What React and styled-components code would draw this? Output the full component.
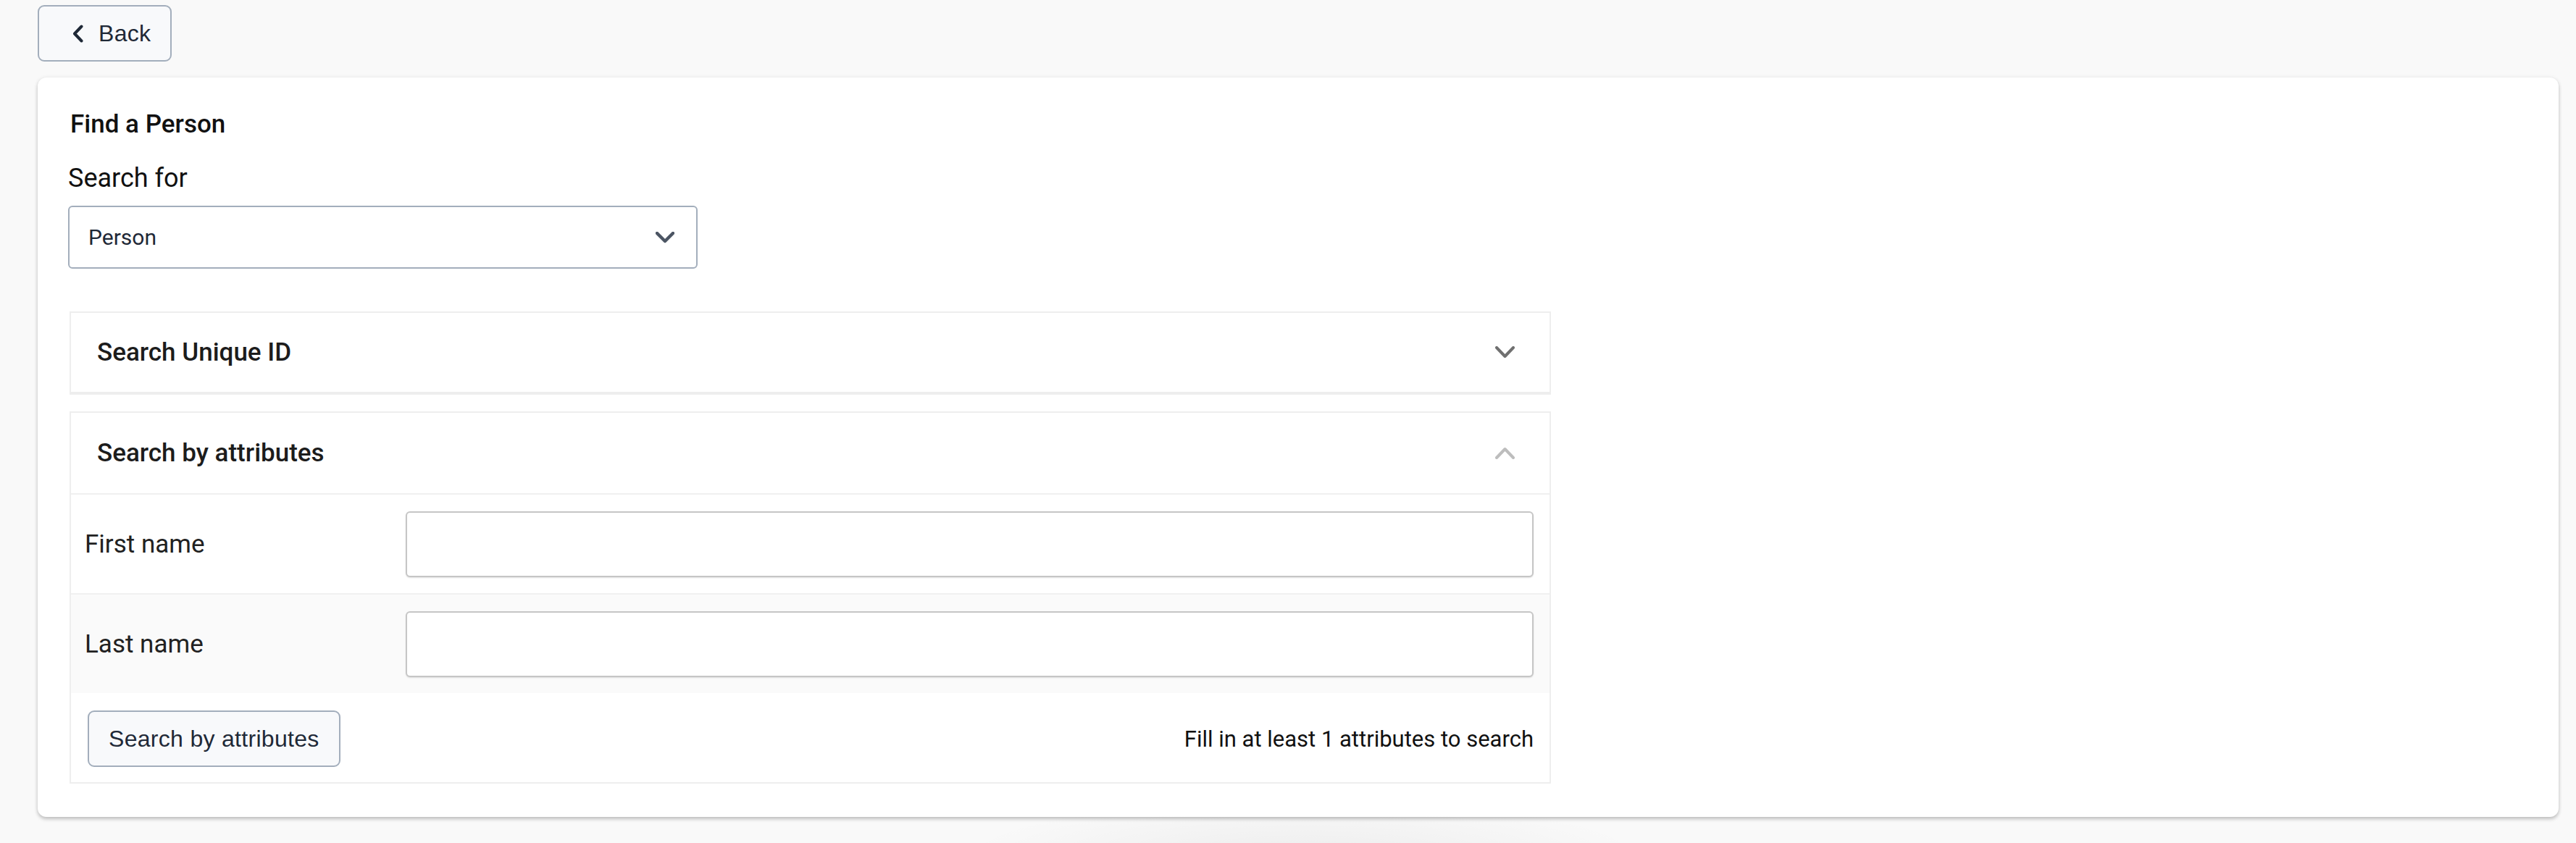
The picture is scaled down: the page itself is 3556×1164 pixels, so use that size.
import React from 'react'
import styled, { createGlobalStyle } from 'styled-components'

const GlobalStyle = createGlobalStyle`
  * { box-sizing: border-box; }
  body {
    margin: 0;
    background: #f9f9f9;
    font-family: Roboto, "Liberation Sans", Arial, sans-serif;
    color: #212121;
  }
`

const Page = styled.div`
  min-height: 1164px;
  padding: 7px 24px 0 52px;
  display: flex;
  flex-direction: column;
  align-items: flex-start;
  background: radial-gradient(ellipse 480px 90px at 1800px 1190px, rgba(0, 0, 0, 0.05), transparent);
`

const OutlineButton = styled.button`
  display: inline-flex;
  align-items: center;
  gap: 21px;
  height: 78px;
  padding: 0 ${p => p.$padRight || 28}px 0 ${p => p.$padLeft || 28}px;
  background: #f8f9fb;
  border: 2px solid #a3aebc;
  border-radius: 9px;
  font-family: "Liberation Sans", Arial, sans-serif;
  font-size: 32px;
  letter-spacing: 0.3px;
  color: #1f2937;
  cursor: pointer;
`

const Card = styled.div`
  align-self: stretch;
  margin-top: 22px;
  padding: 44px 0 46px 42px;
  background: #fff;
  border-radius: 12px;
  box-shadow: 0 3px 5px rgba(0, 0, 0, 0.22), 0 0 6px rgba(0, 0, 0, 0.06);
  display: flex;
  flex-direction: column;
  align-items: flex-start;
`

const Title = styled.h2`
  margin: 0 0 33px 3px;
  font-size: 35px;
  font-weight: 500;
  line-height: 41px;
  color: #111;
`

const FieldLabel = styled.label`
  font-size: 36px;
  line-height: 42px;
  margin-bottom: 17px;
  color: #111;
`

const Select = styled.div`
  width: 869px;
  height: 87px;
  display: flex;
  align-items: center;
  justify-content: space-between;
  padding: 0 30px 0 26px;
  border: 2px solid #a3aebc;
  border-radius: 6px;
  font-size: 30px;
  color: #1f2937;
  margin-bottom: 59px;
`

const Accordion = styled.section`
  width: 2045px;
  margin-left: 2px;
  margin-bottom: ${p => p.$gap || 0}px;
  border: 2px solid #eeeeee;
  border-bottom-width: ${p => (p.$open ? 2 : 4)}px;
  background: #fff;
`

const AccordionHeader = styled.div`
  height: ${p => p.$h}px;
  display: flex;
  align-items: center;
  justify-content: space-between;
  padding: 0 48px 0 36px;
  font-size: 35px;
  font-weight: 500;
  color: #1c1c1c;
`

const Row = styled.div`
  height: 138px;
  display: grid;
  grid-template-columns: 443px 1fr;
  align-items: center;
  padding: 0 22px 0 19px;
  border-top: 2px solid #f0f0f0;
  background: ${p => (p.$striped ? '#fafafa' : '#fff')};
`

const RowLabel = styled.span`
  font-size: 35px;
  color: #212121;
`

const TextInput = styled.input`
  height: 91px;
  width: 100%;
  border: 2px solid #c6c6c6;
  border-radius: 6px;
  background: #fff;
  box-shadow: 0 1px 2px rgba(0, 0, 0, 0.12);
  font-size: 32px;
  padding: 0 20px;
  outline: none;
`

const Footer = styled.div`
  display: flex;
  align-items: center;
  justify-content: space-between;
  padding: 24px 22px 21px 23px;
`

const Hint = styled.span`
  font-size: 31px;
  color: #111;
`

const Chevron = ({ dir = 'down', color, w = 27, h = 17, stroke = 4 }) => (
  <svg width={w} height={h} viewBox={`0 0 ${w} ${h}`} fill="none">
    <path
      d={
        dir === 'down'
          ? `M2 2 L${w / 2} ${h - 3} L${w - 2} 2`
          : `M2 ${h - 2} L${w / 2} 3 L${w - 2} ${h - 2}`
      }
      stroke={color}
      strokeWidth={stroke}
      strokeLinecap="round"
      strokeLinejoin="round"
    />
  </svg>
)

const BackArrow = () => (
  <svg width="15" height="25" viewBox="0 0 15 25" fill="none">
    <path d="M12.5 2.5 L3 12.5 L12.5 22.5" stroke="#1f2937" strokeWidth="4" strokeLinecap="round" strokeLinejoin="round" />
  </svg>
)

const fields = ['First name', 'Last name']

export default function App() {
  return (
    <>
      <GlobalStyle />
      <Page>
        <OutlineButton $padLeft={46} $padRight={27}>
          <BackArrow />
          Back
        </OutlineButton>

        <Card>
          <Title>Find a Person</Title>
          <FieldLabel>Search for</FieldLabel>
          <Select>
            <span>Person</span>
            <Chevron color="#4b5563" w={26} h={16} stroke={4.5} />
          </Select>

          <Accordion $gap={23}>
            <AccordionHeader $h={109}>
              <span>Search Unique ID</span>
              <Chevron color="#707070" />
            </AccordionHeader>
          </Accordion>

          <Accordion $open>
            <AccordionHeader $h={111}>
              <span>Search by attributes</span>
              <Chevron dir="up" color="#bdbdbd" />
            </AccordionHeader>
            {fields.map((f, i) => (
              <Row key={f} $striped={i % 2 === 1}>
                <RowLabel>{f}</RowLabel>
                <TextInput type="text" />
              </Row>
            ))}
            <Footer>
              <OutlineButton $padLeft={27} $padRight={27}>Search by attributes</OutlineButton>
              <Hint>Fill in at least 1 attributes to search</Hint>
            </Footer>
          </Accordion>
        </Card>
      </Page>
    </>
  )
}
